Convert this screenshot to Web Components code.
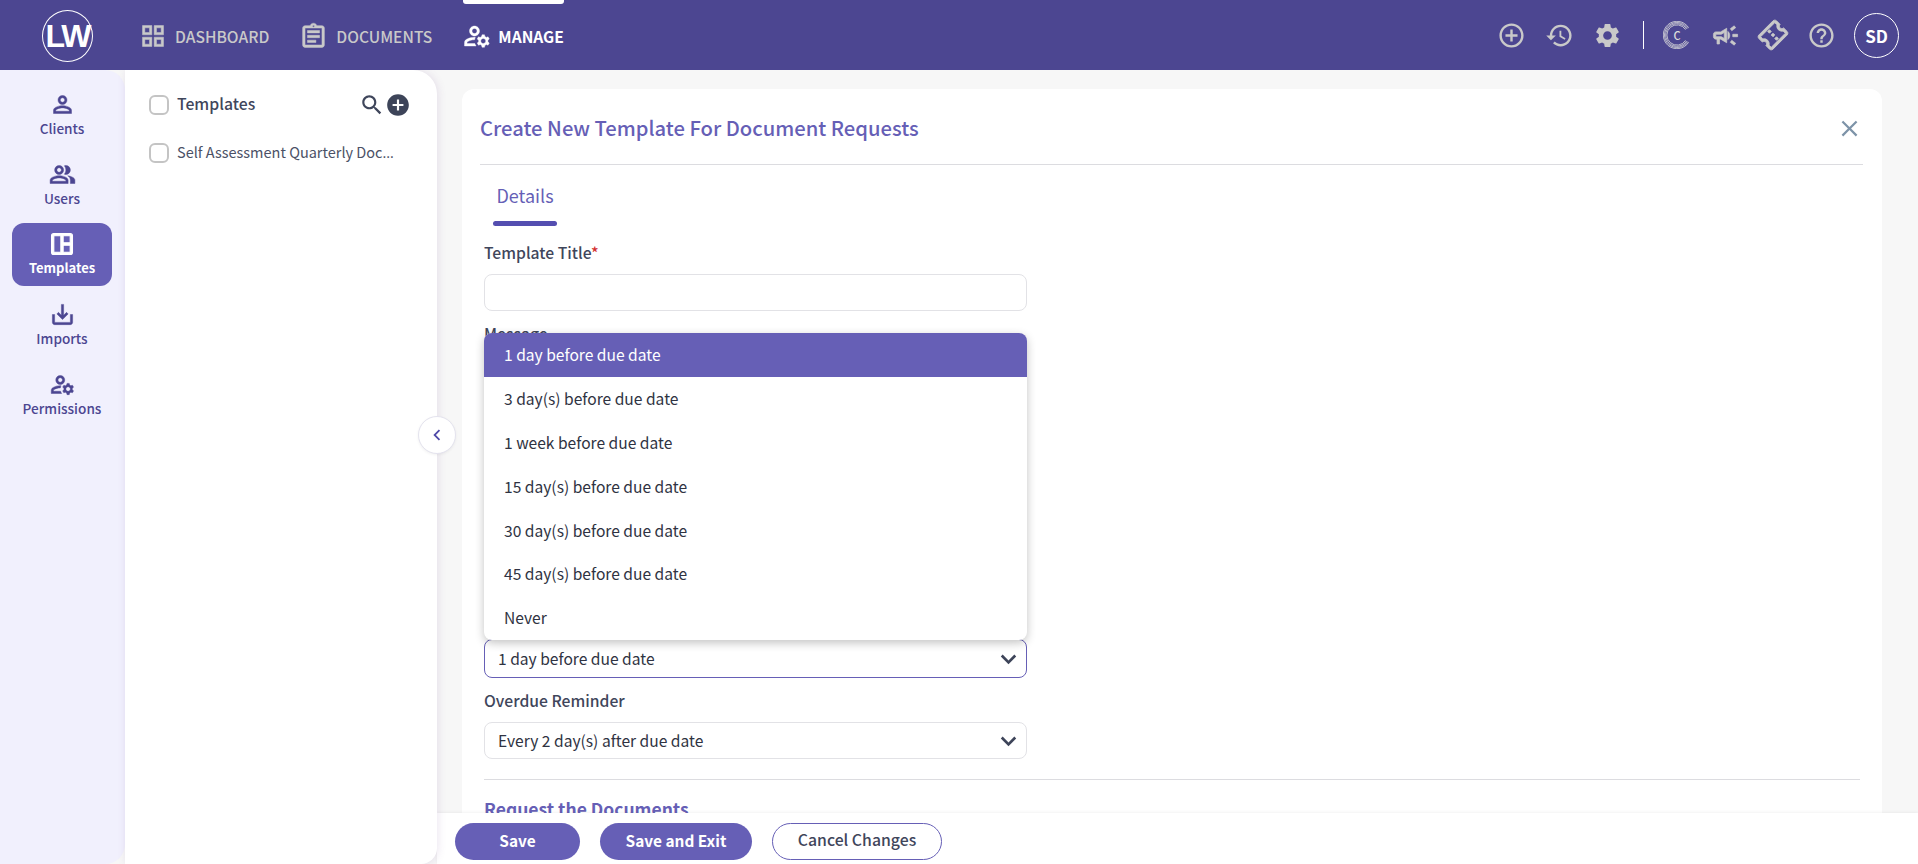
<!DOCTYPE html>
<html lang="en">
<head>
<meta charset="utf-8">
<title>Create New Template</title>
<style>
  html, body { margin: 0; height: 100%; overflow: hidden; }
  body { font-family: "Noto Sans CJK SC", "Open Sans", sans-serif; background: #f7f7f7; }
</style>
</head>
<body>
<app-shell>
  <top-bar slot="top"></top-bar>
  <side-rail slot="rail">
    <rail-item icon="person">Clients</rail-item>
    <rail-item icon="people">Users</rail-item>
    <rail-item icon="mosaic" size="28" heavy="0.9" active>Templates</rail-item>
    <rail-item icon="import">Imports</rail-item>
    <rail-item icon="manage">Permissions</rail-item>
  </side-rail>
  <template-panel slot="panel">
    <template-row>Self Assessment Quarterly Doc<span style="font-family: 'Open Sans', sans-serif">…</span></template-row>
  </template-panel>
  <template-form slot="main"></template-form>
  <form-actions slot="main"></form-actions>
</app-shell>

<script>
const ICONS = {
  dashboard: 'M3 3v8h8V3H3zm6 6H5V5h4v4zm-6 4v8h8v-8H3zm6 6H5v-4h4v4zm4-16v8h8V3h-8zm6 6h-4V5h4v4zm-6 4v8h8v-8h-8zm6 6h-4v-4h4v4z',
  assignment: 'M19 3h-4.18C14.4 1.84 13.3 1 12 1s-2.4.84-2.82 2H5c-1.1 0-2 .9-2 2v14c0 1.1.9 2 2 2h14c1.1 0 2-.9 2-2V5c0-1.1-.9-2-2-2zm-7-.25c.41 0 .75.34.75.75s-.34.75-.75.75-.75-.34-.75-.75.34-.75.75-.75zM19 19H5V5h14v14zM7 15h7v2H7zm0-4h10v2H7zm0-4h10v2H7z',
  manage: 'M4 18v-.65c0-.34.16-.66.41-.81C6.1 15.53 8.03 15 10 15c.03 0 .05 0 .08.01.1-.7.3-1.37.59-1.98-.22-.02-.44-.03-.67-.03-2.42 0-4.68.67-6.61 1.82-.88.52-1.39 1.5-1.39 2.53V20h9.26c-.42-.6-.75-1.28-.97-2H4zM10 12c2.21 0 4-1.79 4-4s-1.79-4-4-4-4 1.79-4 4 1.79 4 4 4zm0-6c1.1 0 2 .9 2 2s-.9 2-2 2-2-.9-2-2 .9-2 2-2zM20.75 16c0-.22-.03-.42-.06-.63l1.14-1.01-1-1.73-1.45.49c-.32-.27-.68-.48-1.08-.63L18 11h-2l-.3 1.49c-.4.15-.76.36-1.08.63l-1.45-.49-1 1.73 1.14 1.01c-.03.21-.06.41-.06.63s.03.42.06.63l-1.14 1.01 1 1.73 1.45-.49c.32.27.68.48 1.08.63L16 21h2l.3-1.49c.4-.15.76-.36 1.08-.63l1.45.49 1-1.73-1.14-1.01c.03-.21.06-.41.06-.63zM17 18c-1.1 0-2-.9-2-2s.9-2 2-2 2 .9 2 2-.9 2-2 2z',
  addOutline: 'M13 7h-2v4H7v2h4v4h2v-4h4v-2h-4V7zm-1-5C6.48 2 2 6.48 2 12s4.48 10 10 10 10-4.48 10-10S17.52 2 12 2zm0 18c-4.41 0-8-3.59-8-8s3.59-8 8-8 8 3.59 8 8-3.59 8-8 8z',
  addFilled: 'M12 2C6.48 2 2 6.48 2 12s4.48 10 10 10 10-4.48 10-10S17.52 2 12 2zm5 11h-4v4h-2v-4H7v-2h4V7h2v4h4v2z',
  history: 'M13 3c-4.97 0-9 4.03-9 9H1l3.89 3.89.07.14L9 12H6c0-3.87 3.13-7 7-7s7 3.13 7 7-3.13 7-7 7c-1.93 0-3.68-.79-4.94-2.06l-1.42 1.42C8.27 19.99 10.51 21 13 21c4.97 0 9-4.03 9-9s-4.03-9-9-9zm-1 5v5l4.28 2.54.72-1.21-3.5-2.08V8H12z',
  settings: 'M19.14 12.94c.04-.3.06-.61.06-.94 0-.32-.02-.64-.07-.94l2.03-1.58c.18-.14.23-.41.12-.61l-1.92-3.32c-.12-.22-.37-.29-.59-.22l-2.39.96c-.5-.38-1.03-.7-1.62-.94l-.36-2.54c-.04-.24-.24-.41-.48-.41h-3.84c-.24 0-.43.17-.47.41l-.36 2.54c-.59.24-1.13.57-1.62.94l-2.39-.96c-.22-.08-.47 0-.59.22L2.74 8.87c-.12.21-.08.47.12.61l2.03 1.58c-.05.3-.09.63-.09.94s.02.64.07.94l-2.03 1.58c-.18.14-.23.41-.12.61l1.92 3.32c.12.22.37.29.59.22l2.39-.96c.5.38 1.03.7 1.62.94l.36 2.54c.05.24.24.41.48.41h3.84c.24 0 .44-.17.47-.41l.36-2.54c.59-.24 1.13-.56 1.62-.94l2.39.96c.22.08.47 0 .59-.22l1.92-3.32c.12-.22.07-.47-.12-.61l-2.01-1.58zM12 15.6c-1.98 0-3.6-1.62-3.6-3.6s1.62-3.6 3.6-3.6 3.6 1.62 3.6 3.6-1.62 3.6-3.6 3.6z',
  campaign: 'M18 11v2h4v-2h-4zm-2 6.61c.96.71 2.21 1.65 3.2 2.39.4-.53.8-1.07 1.2-1.6-.99-.74-2.24-1.68-3.2-2.4-.4.54-.8 1.08-1.2 1.61zM20.4 5.6c-.4-.53-.8-1.07-1.2-1.6-.99.74-2.24 1.68-3.2 2.4.4.53.8 1.07 1.2 1.6.96-.72 2.21-1.65 3.2-2.4zM4 9c-1.1 0-2 .9-2 2v2c0 1.1.9 2 2 2h1v4h2v-4h1l5 3V6L8 9H4zm5.03 1.71L11 9.53v4.94l-1.97-1.18-.48-.29H4v-2h4.55l.48-.29zM15.5 12c0-1.33-.58-2.53-1.5-3.35v6.69c.92-.81 1.5-2.01 1.5-3.34z',
  ticket: 'M22 10V6c0-1.11-.9-2-2-2H4c-1.1 0-1.99.89-1.99 2v4c1.1 0 1.99.9 1.99 2s-.89 2-2 2v4c0 1.1.9 2 2 2h16c1.1 0 2-.9 2-2v-4c-1.1 0-2-.9-2-2s.9-2 2-2zm-2-1.46c-1.19.69-2 1.99-2 3.46s.81 2.77 2 3.46V18H4v-2.54c1.19-.69 2-1.99 2-3.46 0-1.48-.8-2.77-1.99-3.46L4 6h16v2.54zM11 15h2v2h-2zm0-4h2v2h-2zm0-4h2v2h-2z',
  help: 'M11 18h2v-2h-2v2zm1-16C6.48 2 2 6.48 2 12s4.48 10 10 10 10-4.48 10-10S17.52 2 12 2zm0 18c-4.41 0-8-3.59-8-8s3.59-8 8-8 8 3.59 8 8-3.59 8-8 8zm0-14c-2.21 0-4 1.79-4 4h2c0-1.1.9-2 2-2s2 .9 2 2c0 2-3 1.75-3 5h2c0-2.25 3-2.5 3-5 0-2.21-1.79-4-4-4z',
  person: 'M12 6c1.1 0 2 .9 2 2s-.9 2-2 2-2-.9-2-2 .9-2 2-2m0 9c2.7 0 5.8 1.29 6 2v1H6v-.99c.2-.72 3.3-2.01 6-2.01m0-11C9.79 4 8 5.79 8 8s1.79 4 4 4 4-1.79 4-4-1.79-4-4-4zm0 9c-2.67 0-8 1.34-8 4v3h16v-3c0-2.66-5.33-4-8-4z',
  people: 'M16.67 13.13C18.04 14.06 19 15.32 19 17v3h4v-3c0-2.18-3.57-3.47-6.33-3.87zM15 12c2.21 0 4-1.79 4-4s-1.79-4-4-4c-.47 0-.91.1-1.33.24C14.5 5.27 15 6.58 15 8s-.5 2.73-1.33 3.76c.42.14.86.24 1.33.24zM9 12c2.21 0 4-1.79 4-4s-1.79-4-4-4-4 1.79-4 4 1.79 4 4 4zm0-6c1.1 0 2 .9 2 2s-.9 2-2 2-2-.9-2-2 .9-2 2-2zm0 7c-2.67 0-8 1.34-8 4v3h16v-3c0-2.66-5.33-4-8-4zm6 5H3v-.99C3.2 16.29 6.3 15 9 15s5.8 1.29 6 2v1z',
  mosaic: 'M3 5v14c0 1.1.9 2 2 2h14c1.1 0 2-.9 2-2V5c0-1.1-.9-2-2-2H5c-1.1 0-2 .9-2 2zm8 14H5V5h6v14zm8 0h-6v-6h6v6zm0-8h-6V5h6v6z',
  import: 'M19 12v7H5v-7H3v7c0 1.1.9 2 2 2h14c1.1 0 2-.9 2-2v-7h-2zm-6 .67l2.59-2.58L17 11.5l-5 5-5-5 1.41-1.41L11 12.67V3h2z',
  search: 'M15.5 14h-.79l-.28-.27C15.41 12.59 16 11.11 16 9.5 16 5.91 13.09 3 9.5 3S3 5.91 3 9.5 5.91 16 9.5 16c1.61 0 3.09-.59 4.23-1.57l.27.28v.79l5 4.99L20.49 19l-4.99-5zm-6 0C7.01 14 5 11.99 5 9.5S7.01 5 9.5 5 14 7.01 14 9.5 11.99 14 9.5 14z',
  close: 'M19 6.41L17.59 5 12 10.59 6.41 5 5 6.41 10.59 12 5 17.59 6.41 19 12 13.41 17.59 19 19 17.59 13.41 12z',
  chevronDown: 'M6.4 8.2L12 13.8l5.6-5.6 1.8 1.8-7.4 7.4L4.6 10z',
  chevronLeft: 'M15.4 7.4L14 6l-6 6 6 6 1.4-1.4L10.8 12z'
};

class UiIcon extends HTMLElement {
  connectedCallback() {
    const size = this.getAttribute('size') || 24;
    const tilt = this.getAttribute('tilt') || 0;
    const heavy = this.getAttribute('heavy') || 0;
    this.attachShadow({ mode: 'open' }).innerHTML = `
      <style>
        :host { display: inline-flex; flex: none; color: inherit; }
        svg { display: block; fill: currentColor; stroke: currentColor; stroke-linejoin: round; }
      </style>
      <svg width="${size}" height="${size}" viewBox="0 0 24 24" stroke-width="${heavy}" style="transform: rotate(${tilt}deg)">
        <path d="${ICONS[this.getAttribute('name')]}"></path>
      </svg>`;
  }
}

class AppShell extends HTMLElement {
  connectedCallback() {
    this.attachShadow({ mode: 'open' }).innerHTML = `
      <style>
        :host { display: grid; grid-template-rows: 70px 1fr; height: 864px; overflow: hidden; }
        .body { display: grid; grid-template-columns: 125px 312px 1fr; min-height: 0; }
        .main { display: flex; flex-direction: column; min-width: 0; min-height: 0; }
      </style>
      <slot name="top"></slot>
      <div class="body">
        <slot name="rail"></slot>
        <slot name="panel"></slot>
        <div class="main"><slot name="main"></slot></div>
      </div>`;
  }
}

class TopBar extends HTMLElement {
  connectedCallback() {
    this.attachShadow({ mode: 'open' }).innerHTML = `
      <style>
        :host { display: flex; align-items: center; background: #4c4691; padding: 0 19px 0 42px; position: relative; z-index: 3; }
        .logo {
          width: 51px; height: 52px; box-sizing: border-box; border: 1px solid #fff; border-radius: 50%;
          display: flex; align-items: center; justify-content: center; margin-top: 1px;
          color: #fff; font-family: "Liberation Sans", sans-serif; font-size: 32px; line-height: 1; font-weight: 700; letter-spacing: -2px;
        }
        nav { display: flex; margin-left: 46px; height: 100%; }
        .link { display: flex; align-items: center; gap: 8px; color: #c9c9c9; font-size: 15.6px; line-height: 22px; font-weight: 500; margin-right: 30px; position: relative; padding-top: 2px; }
        .link.on { color: #fff; gap: 6px; font-weight: 700; margin: 0; }
        .link.on::before { content: ""; position: absolute; left: 1px; right: 0; top: 0; height: 4px; background: #fff; border-radius: 0 0 3px 3px; }
        .tools { margin-left: auto; display: flex; align-items: center; color: #c9c9c9; }
        .tool { width: 48px; display: flex; justify-content: center; }
        .sep { width: 1px; height: 28px; background: #fff; margin: 0 9px 0 12px; }
        .coin { position: relative; width: 28px; height: 28px; color: #dcdcdc; }
        .coin svg { display: block; }
        .coin span { position: absolute; inset: 0; display: flex; align-items: center; justify-content: center; font-size: 11px; line-height: 1; font-weight: 500; }
        .avatar { width: 45px; height: 45px; box-sizing: border-box; border: 1px solid #fff; border-radius: 50%; margin-left: 9px; display: flex; align-items: center; justify-content: center; color: #fff; font-size: 17px; line-height: 1; font-weight: 700; }
      </style>
      <div class="logo">LW</div>
      <nav>
        <div class="link"><ui-icon name="dashboard" size="28" heavy="0.4"></ui-icon>DASHBOARD</div>
        <div class="link"><ui-icon name="assignment" size="29" heavy="0.4"></ui-icon>DOCUMENTS</div>
        <div class="link on"><ui-icon name="manage" size="30" heavy="0.3"></ui-icon>MANAGE</div>
      </nav>
      <div class="tools">
        <div class="tool"><ui-icon name="addOutline" size="29"></ui-icon></div>
        <div class="tool"><ui-icon name="history" size="29"></ui-icon></div>
        <div class="tool"><ui-icon name="settings" size="29"></ui-icon></div>
        <div class="sep"></div>
        <div class="tool">
          <div class="coin">
            <svg width="28" height="28" viewBox="0 0 28 28" fill="none" stroke="currentColor" stroke-width=".8">
              <path d="M25.6 6.74A13.7 13.7 0 1 0 25.6 21.26"></path>
              <path d="M24.6 7.38A12.5 12.5 0 1 0 24.6 20.62"></path>
              <path d="M23.58 8A11.3 11.3 0 1 0 23.58 20"></path>
              <path d="M22.56 8.65A10.1 10.1 0 1 0 22.56 19.35"></path>
            </svg>
            <span>C</span>
          </div>
        </div>
        <div class="tool"><ui-icon name="campaign" size="29" heavy="0.6"></ui-icon></div>
        <div class="tool"><ui-icon name="ticket" size="30" tilt="-45" heavy="0.7"></ui-icon></div>
        <div class="tool"><ui-icon name="help" size="29"></ui-icon></div>
        <div class="avatar">SD</div>
      </div>`;
  }
}

class SideRail extends HTMLElement {
  connectedCallback() {
    this.attachShadow({ mode: 'open' }).innerHTML = `
      <style>
        :host { display: flex; flex-direction: column; gap: 7px; background: #f1f0fd; padding: 13px 13px 0 12px; border-radius: 0 20px 20px 0; box-sizing: border-box; }
      </style>
      <slot></slot>`;
  }
}

class RailItem extends HTMLElement {
  connectedCallback() {
    const size = this.getAttribute('size') || 27;
    const heavy = this.getAttribute('heavy') || 0.4;
    this.attachShadow({ mode: 'open' }).innerHTML = `
      <style>
        :host { display: flex; flex-direction: column; align-items: center; justify-content: center; height: 63px; color: #4c4691; font-size: 13.6px; line-height: 20px; font-weight: 500; border-radius: 12px; }
        :host([active]) { background: #665fb6; color: #fff; font-weight: 700; font-size: 13px; }
        div { padding-bottom: 1px; }
      </style>
      <ui-icon name="${this.getAttribute('icon')}" size="${size}" heavy="${heavy}"></ui-icon>
      <div><slot></slot></div>`;
  }
}

class TemplatePanel extends HTMLElement {
  connectedCallback() {
    this.attachShadow({ mode: 'open' }).innerHTML = `
      <style>
        :host { display: block; position: relative; z-index: 2; background: #fff; border-radius: 0 24px 16px 0; box-shadow: 1px 0 8px rgba(110, 70, 150, .14); padding: 23px 26px 0 24px; color: #3f465b; }
        .head { display: flex; align-items: center; height: 24px; }
        .box { width: 20px; height: 20px; box-sizing: border-box; border: 2px solid #c4c4c4; border-radius: 6px; margin-right: 8px; flex: none; }
        .title { font-size: 15.8px; line-height: 22px; font-weight: 500; flex: 1; padding-bottom: 2px; }
        .add { color: #3d4459; }
        .rows { margin-top: 24px; }
        .toggle { position: absolute; right: -19px; top: 346px; width: 38px; height: 38px; box-sizing: border-box; border-radius: 50%; background: #fff; border: 1px solid #e4e3ee; color: #4f49a8; display: flex; align-items: center; justify-content: center; box-shadow: 0 1px 3px rgba(0,0,0,.06); }
      </style>
      <div class="head">
        <span class="box"></span>
        <span class="title">Templates</span>
        <ui-icon name="search" size="26"></ui-icon>
        <ui-icon class="add" name="addFilled" size="26"></ui-icon>
      </div>
      <div class="rows"><slot></slot></div>
      <div class="toggle"><ui-icon name="chevronLeft" size="22"></ui-icon></div>`;
  }
}

class TemplateRow extends HTMLElement {
  connectedCallback() {
    this.attachShadow({ mode: 'open' }).innerHTML = `
      <style>
        :host { display: flex; align-items: center; height: 24px; font-size: 14.5px; line-height: 22px; color: #4b5166; }
        .box { width: 20px; height: 20px; box-sizing: border-box; border: 2px solid #c4c4c4; border-radius: 6px; margin-right: 8px; flex: none; }
        .text { white-space: nowrap; padding-bottom: 2px; }
      </style>
      <span class="box"></span>
      <span class="text"><slot></slot></span>`;
  }
}

class FieldLabel extends HTMLElement {
  connectedCallback() {
    this.attachShadow({ mode: 'open' }).innerHTML = `
      <style>
        :host { display: block; font-size: 15.7px; line-height: 22px; font-weight: 500; color: #3f465b; padding-top: 1px; margin-bottom: 10px; }
        :host([required]) .star { display: inline; }
        .star { display: none; color: #d32f2f; }
      </style>
      <slot></slot><span class="star">*</span>`;
  }
}

class SelectBox extends HTMLElement {
  connectedCallback() {
    this.attachShadow({ mode: 'open' }).innerHTML = `
      <style>
        :host { display: flex; align-items: center; justify-content: space-between; position: relative; height: 37px; box-sizing: border-box; border: 1px solid #e2e2e6; border-radius: 8px; padding: 0 5px 0 13px; font-size: 15.6px; line-height: 22px; color: #2f3342; background: #fff; }
        :host([open]) { height: 39px; border-color: #665fb6; }
        .text { padding-bottom: 1px; }
        .chev { color: #3d4459; }
      </style>
      <span class="text"><slot></slot></span>
      <ui-icon class="chev" name="chevronDown" size="25"></ui-icon>
      <slot name="menu"></slot>`;
  }
}

class SelectMenu extends HTMLElement {
  connectedCallback() {
    this.attachShadow({ mode: 'open' }).innerHTML = `
      <style>
        :host { display: block; position: absolute; left: -1px; right: -1px; bottom: 100%; background: #fff; border-radius: 8px; overflow: hidden; box-shadow: 0 3px 10px rgba(0, 0, 0, .24); z-index: 2; }
      </style>
      <slot></slot>`;
  }
}

class SelectOption extends HTMLElement {
  connectedCallback() {
    this.attachShadow({ mode: 'open' }).innerHTML = `
      <style>
        :host { display: flex; align-items: center; height: 43.8px; box-sizing: border-box; padding: 0 0 2px 20px; font-size: 15.6px; color: #2f3342; }
        :host([selected]) { background: #665fb6; color: #fff; }
      </style>
      <slot></slot>`;
  }
}

class TemplateForm extends HTMLElement {
  connectedCallback() {
    this.attachShadow({ mode: 'open' }).innerHTML = `
      <style>
        :host { display: block; flex: 1; min-height: 0; overflow: hidden; padding: 19px 36px 0 25px; }
        .card { background: #fff; border-radius: 12px 12px 0 0; padding: 0 19px 0 18px; height: 800px; }
        .head { display: flex; align-items: center; justify-content: space-between; height: 76px; box-sizing: border-box; border-bottom: 1px solid #dcdce0; padding-top: 3px; }
        h2 { margin: 0; font-size: 20.2px; line-height: 30px; font-weight: 500; color: #665fb6; }
        .close { color: #7d93a8; }
        .tab { display: block; width: 64px; margin-left: 13px; margin-top: 16px; }
        .tab span { display: block; text-align: center; font-size: 18px; line-height: 28px; color: #665fb6; }
        .tab i { display: block; height: 5px; margin-top: 12px; border-radius: 3px; background: #544eb0; }
        form { display: block; margin: 15px 3px 0 4px; }
        .narrow { width: 543px; }
        .input { height: 37px; box-sizing: border-box; border: 1px solid #e2e2e6; border-radius: 8px; margin-bottom: 11px; }
        .notes { height: 272px; margin-bottom: 12px; }
        .rule { height: 1px; background: #dcdce0; margin: 20px 0 0; }
        h3 { margin: 17px 0 0; font-size: 17.5px; line-height: 24px; font-weight: 700; color: #665fb6; }
        select-box + field-label { margin-top: 11px; }
      </style>
      <div class="card">
        <div class="head">
          <h2>Create New Template For Document Requests</h2>
          <ui-icon class="close" name="close" size="27"></ui-icon>
        </div>
        <div class="tab"><span>Details</span><i></i></div>
        <form>
          <div class="narrow">
            <field-label required>Template Title</field-label>
            <div class="input"></div>
            <field-label>Message</field-label>
            <div class="notes"></div>
            <select-box open>1 day before due date
              <select-menu slot="menu">
                <select-option selected>1 day before due date</select-option>
                <select-option>3 day(s) before due date</select-option>
                <select-option>1 week before due date</select-option>
                <select-option>15 day(s) before due date</select-option>
                <select-option>30 day(s) before due date</select-option>
                <select-option>45 day(s) before due date</select-option>
                <select-option>Never</select-option>
              </select-menu>
            </select-box>
            <field-label>Overdue Reminder</field-label>
            <select-box>Every 2 day(s) after due date</select-box>
          </div>
          <div class="rule"></div>
          <h3>Request the Documents</h3>
        </form>
      </div>`;
  }
}

class PillButton extends HTMLElement {
  connectedCallback() {
    this.attachShadow({ mode: 'open' }).innerHTML = `
      <style>
        :host { display: inline-flex; align-items: center; justify-content: center; height: 37px; box-sizing: border-box; padding-bottom: 3px; border-radius: 19px; background: #665fb6; color: #fff; font-size: 15.4px; line-height: 22px; font-weight: 700; }
        :host([outline]) { background: #fff; color: #3f465b; border: 1px solid #665fb6; font-weight: 500; font-size: 15.8px; }
      </style>
      <slot></slot>`;
  }
}

class FormActions extends HTMLElement {
  connectedCallback() {
    this.attachShadow({ mode: 'open' }).innerHTML = `
      <style>
        :host { display: flex; gap: 20px; align-items: flex-start; height: 51px; flex: none; box-sizing: border-box; padding: 10px 0 0 18px; background: #fff; position: relative; box-shadow: 0 -1px 3px rgba(0, 0, 0, .05); }
      </style>
      <pill-button style="width:125px">Save</pill-button>
      <pill-button style="width:152px">Save and Exit</pill-button>
      <pill-button outline style="width:170px">Cancel Changes</pill-button>`;
  }
}

customElements.define('ui-icon', UiIcon);
customElements.define('app-shell', AppShell);
customElements.define('top-bar', TopBar);
customElements.define('side-rail', SideRail);
customElements.define('rail-item', RailItem);
customElements.define('template-panel', TemplatePanel);
customElements.define('template-row', TemplateRow);
customElements.define('field-label', FieldLabel);
customElements.define('select-box', SelectBox);
customElements.define('select-menu', SelectMenu);
customElements.define('select-option', SelectOption);
customElements.define('template-form', TemplateForm);
customElements.define('pill-button', PillButton);
customElements.define('form-actions', FormActions);
</script>
</body>
</html>
